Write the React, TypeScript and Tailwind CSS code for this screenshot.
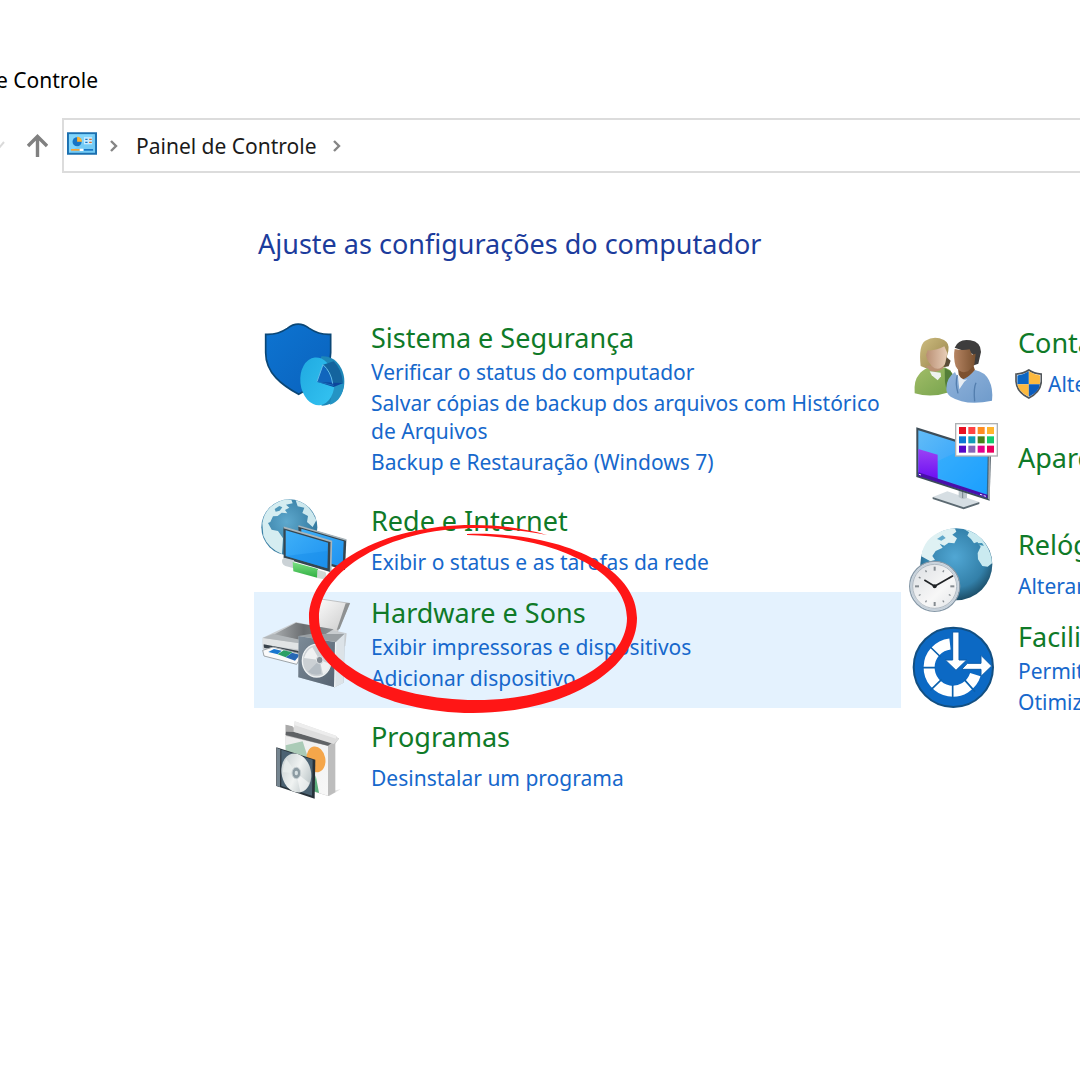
import type { ReactNode } from "react";

function Icon({ box, children }: { box: string; children: ReactNode }) {
  return (
    <svg viewBox={box} className="h-[72px] w-[88px] shrink-0 overflow-visible" aria-hidden="true">
      {children}
    </svg>
  );
}

function SecurityIcon() {
  return (
    <Icon box="30 30 264 216">
      <defs>
        <linearGradient id="sec" x1="0" y1="0" x2="1" y2="1">
          <stop offset="0" stopColor="#0d74d1" />
          <stop offset="1" stopColor="#0a62bd" />
        </linearGradient>
        <linearGradient id="disc" x1="0" y1="0" x2="1" y2="1">
          <stop offset="0" stopColor="#1fa9e0" />
          <stop offset="1" stopColor="#35c4f2" />
        </linearGradient>
      </defs>
      <path d="M47 73Q82 75 112 55Q144 30 178 55Q208 75 242 73V128C242 190 195 226 146 253C97 226 47 190 47 128Z" fill="url(#sec)" stroke="#0b4776" strokeWidth="5" />
      <path d="M214 139C252 135 283 170 283 215C283 253 258 285 215 287L200 210Z" fill="#1e87b8" />
      <path d="M250 221L282 221C281 250 265 277 240 284Z" fill="#2494c4" />
      <ellipse cx="202" cy="214" rx="51" ry="72" fill="url(#disc)" transform="rotate(-6 202 214)" />
      <path d="M201 215L219 164Q240 184 252 221Z" fill="#1166bd" />
      <path d="M219 164L251 154Q274 176 279 218L249 220Q240 184 219 164Z" fill="#14649e" />
      <path d="M201 215L248 218L280 219L251 231Z" fill="#0d459b" />
      <path d="M201 215L219 164Q243 185 248 221" fill="none" stroke="#63bce9" strokeWidth="3" />
      <path d="M201 215L251 226" stroke="#1e8ad0" strokeWidth="2" />
    </Icon>
  );
}

function NetworkIcon() {
  return (
    <Icon box="30 39 264 216">
      <defs>
        <radialGradient id="netGlobe" cx=".45" cy=".4" r=".65">
          <stop offset="0" stopColor="#5ea9ce" />
          <stop offset="1" stopColor="#2d7298" />
        </radialGradient>
        <linearGradient id="screen" x1="0" y1="0" x2="1" y2="1">
          <stop offset="0" stopColor="#3fb0f8" />
          <stop offset="1" stopColor="#1e92f0" />
        </linearGradient>
        <linearGradient id="cable" x1="0" y1="0" x2="0" y2="1">
          <stop offset="0" stopColor="#7be083" />
          <stop offset="1" stopColor="#2fae41" />
        </linearGradient>
      </defs>
      <circle cx="118" cy="112" r="84" fill="url(#netGlobe)" />
      <path d="M37 100Q43 60 75 41Q100 25 124 29L128 40L108 44L118 53L105 60L112 70L95 68L83 78L69 79L61 96L54 99L65 119L84 123L99 145L96 192Q54 174 40 137Z" fill="#d5edf1" />
      <path d="M137 31Q181 42 199 91L188 111L171 96L174 78L157 69L163 53L143 49Z" fill="#cde8ee" />
      <path d="M74 57L88 48L97 52L89 62L77 65Z" fill="#4f97b9" />
      <path d="M145 107L289 149L285 240L245 229L148 198Z" fill="#364650" />
      <path d="M154 116L281 154L278 231L154 196Z" fill="url(#screen)" />
      <path d="M145 108L289 150" stroke="#a9b5bb" strokeWidth="4" />
      <path d="M100 112L244 155L241 246L101 205Z" fill="#364650" />
      <path d="M107 121L234 158L232 235L107 198Z" fill="url(#screen)" />
      <path d="M107 198L232 183V235Z" fill="#168be9" opacity=".45" />
      <path d="M101 112L244 154L242 243" fill="none" stroke="#a9b5bb" strokeWidth="5" />
      <path d="M103 203L132 211V235L106 228Q92 221 97 208Z" fill="#cbd2d6" />
      <path d="M128 216L204 237V264L130 244Z" fill="url(#cable)" />
      <path d="M202 239L226 246Q233 256 223 268L201 264Z" fill="#cfd8d4" />
    </Icon>
  );
}

function PrinterIcon() {
  return (
    <Icon box="30 15 264 216">
      <defs>
        <linearGradient id="prTop" x1="0" y1="0" x2="1" y2="0">
          <stop offset="0" stopColor="#a9adaf" />
          <stop offset=".5" stopColor="#6a6d70" />
          <stop offset="1" stopColor="#8b8f92" />
        </linearGradient>
        <linearGradient id="paper" x1="0" y1="0" x2="1" y2="1">
          <stop offset="0" stopColor="#ffffff" />
          <stop offset="1" stopColor="#c9c9c9" />
        </linearGradient>
        <linearGradient id="speaker" x1="0" y1="0" x2="1" y2="1">
          <stop offset="0" stopColor="#7c8b98" />
          <stop offset="1" stopColor="#566371" />
        </linearGradient>
      </defs>
      <path d="M205 26L299 40L262 126L190 112Z" fill="url(#paper)" stroke="#aaa" strokeWidth="2" />
      <path d="M287 40L300 39L269 116L260 121Z" fill="#8e9192" />
      <path d="M38 143L138 96L290 130L286 168L180 203L38 177Z" fill="#c8cccf" />
      <path d="M71 134L138 98L251 118L184 158Z" fill="url(#prTop)" />
      <path d="M38 143L180 164L181 183L38 164Z" fill="#e1e4e5" />
      <path d="M38 144L70 132L184 157L180 164Z" fill="#b2b7ba" />
      <path d="M41 163L157 185V195L42 173Z" fill="#39434b" />
      <path d="M38 181L69 171L157 193L140 223L42 198Z" fill="#fafafa" stroke="#9ea5a9" strokeWidth="3" />
      <path d="M55 186L72 177L95 182L83 193Z" fill="#1877cf" />
      <path d="M83 193L101 181L127 187L107 202Z" fill="#2a9f65" />
      <path d="M107 202L126 188L150 194L135 212Z" fill="#2768b5" />
      <path d="M146 138L250 134L285 129L281 278L254 292L145 262Z" fill="#bdc6cd" />
      <path d="M146 138L257 157L254 292L145 262Z" fill="url(#speaker)" />
      <path d="M257 157L284 130L280 279L255 291Z" fill="#dce3e8" />
      <path d="M146 138L180 132L283 132L257 156Z" fill="#999fa3" />
      <path d="M257 157L254 291" stroke="#eef2f4" strokeWidth="4" />
      <ellipse cx="200" cy="212" rx="43" ry="49" fill="#cbd0d4" stroke="#eef1f2" strokeWidth="4" />
      <path d="M209 210L187 172Q169 181 162 204Z" fill="#f0f2f3" />
      <path d="M209 210L219 253Q235 245 241 222Z" fill="#edf0f1" />
      <path d="M209 210L174 245Q193 260 214 251Z" fill="#b5bdc4" />
      <ellipse cx="209" cy="210" rx="10" ry="11" fill="#858d95" stroke="#e4e7e9" strokeWidth="3" />
    </Icon>
  );
}

function ProgramsIcon() {
  return (
    <Icon box="30 27 264 216">
      <defs>
        <linearGradient id="boxFront" x1="0" y1="0" x2="1" y2="1">
          <stop offset="0" stopColor="#ececec" />
          <stop offset="1" stopColor="#f8f8f8" />
        </linearGradient>
        <linearGradient id="cd" x1="0" y1="0" x2="1" y2="1">
          <stop offset="0" stopColor="#bec8ca" />
          <stop offset=".5" stopColor="#f0f3f2" />
          <stop offset="1" stopColor="#aab6ba" />
        </linearGradient>
      </defs>
      <path d="M232 245L272 238L237 259Z" fill="#e3e3e3" />
      <path d="M107 44L130 52L267 85L256 101V247L235 258L107 220Z" fill="#bdbdbd" />
      <path d="M108 78L234 108V257L107 220Z" fill="url(#boxFront)" />
      <path d="M107 44L128 49L131 65L251 87L234 107L107 75Z" fill="#aaaaaa" />
      <path d="M108 65L131 66L249 96L234 107L107 75Z" fill="#5f6265" />
      <path d="M134 34L258 77L267 88L251 102L131 65Z" fill="#dedede" />
      <path d="M134 34L258 77L258 86L135 46Z" fill="#ededed" />
      <path d="M107 106L158 94L174 143L162 182L108 166Z" fill="#abcbb7" />
      <ellipse cx="198" cy="148" rx="28" ry="39" fill="#f5a64a" transform="rotate(-10 198 148)" />
      <path d="M197 196L207 249L190 244Z" fill="#5cae7c" />
      <path d="M79 112L196 149L194 266L79 228Z" fill="#273139" />
      <path d="M94 119L188 149L186 257L94 228Z" fill="#4b6272" />
      <path d="M81 114L91 118L90 231L81 228Z" fill="#758590" />
      <ellipse cx="139" cy="189" rx="44" ry="59" fill="url(#cd)" transform="rotate(-13 139 189)" />
      <path d="M139 189L109 147Q98 165 99 187Z" fill="#e8eeec" opacity=".8" />
      <path d="M139 189L151 246Q172 242 178 219Z" fill="#fff" opacity=".55" />
      <ellipse cx="139" cy="189" rx="13" ry="17" fill="#8c9ba2" stroke="#c8d0d3" strokeWidth="3" />
      <ellipse cx="139" cy="189" rx="5" ry="7" fill="#d7e0e2" />
    </Icon>
  );
}

function UsersIcon() {
  return (
    <Icon box="27 15 264 216">
      <defs>
        <linearGradient id="hair" x1="0" y1="0" x2="1" y2="1">
          <stop offset="0" stopColor="#cebd80" />
          <stop offset="1" stopColor="#958149" />
        </linearGradient>
        <linearGradient id="faceA" x1="0" y1="0" x2="1" y2="0">
          <stop offset="0" stopColor="#b98f73" />
          <stop offset="1" stopColor="#e8ceb8" />
        </linearGradient>
        <linearGradient id="faceB" x1="0" y1="0" x2="1" y2="0">
          <stop offset="0" stopColor="#b68563" />
          <stop offset="1" stopColor="#79502f" />
        </linearGradient>
        <linearGradient id="green" x1="0" y1="0" x2="1" y2="1">
          <stop offset="0" stopColor="#a2bd68" />
          <stop offset="1" stopColor="#76a34d" />
        </linearGradient>
        <linearGradient id="blue" x1="0" y1="0" x2="1" y2="1">
          <stop offset="0" stopColor="#91b3db" />
          <stop offset="1" stopColor="#6f9bcb" />
        </linearGradient>
      </defs>
      <path d="M135 107L152 122L146 139L130 142Z" fill="#5b4c38" />
      <path d="M62 138Q55 75 76 62Q103 45 132 60Q150 70 145 93L132 142L85 148Z" fill="url(#hair)" />
      <path d="M79 137L126 134L137 154L112 181L84 162Z" fill="#ba9073" />
      <path d="M83 91Q108 93 133 79L142 99L135 132Q122 151 104 145Q82 130 78 105Z" fill="url(#faceA)" />
      <path d="M44 220Q41 181 56 165Q65 151 83 144Q100 168 134 142L151 151L158 166L147 217Q94 235 44 220Z" fill="url(#green)" />
      <path d="M89 154L122 158L123 169L113 181L95 166Z" fill="#eef3ef" />
      <path d="M134 145L151 153L158 162L145 184L139 208L135 186Z" fill="#547f39" />
      <path d="M164 83Q176 55 211 61Q243 66 243 96L235 131L222 136L218 102Z" fill="#3e3d3d" />
      <path d="M173 139L217 126L225 151Q209 169 202 175Q184 184 176 163Z" fill="#7d512f" />
      <path d="M164 87Q187 93 209 88L216 104L227 101L223 135L204 154Q180 163 167 139Q159 112 164 87Z" fill="url(#faceB)" />
      <path d="M139 204Q140 173 165 156Q173 176 185 180Q207 172 225 150Q255 156 267 181Q280 206 276 242Q199 259 152 230Q138 220 139 204Z" fill="url(#blue)" />
      <path d="M173 164L178 208L193 185L202 178Q185 183 173 164Z" fill="#e7edf3" />
      <path d="M172 165Q165 190 174 220M224 244Q220 205 228 188" fill="none" stroke="#537eae" strokeWidth="4" />
    </Icon>
  );
}

const swatches = [
  ["#e81123", "#ff4343", "#ff8c21", "#ffb52e"],
  ["#0c78d4", "#109cb8", "#47821b", "#14cb6c"],
  ["#5608c8", "#8765b8", "#e3008c", "#ea005e"],
];

function AppearanceIcon() {
  return (
    <Icon box="27 6 264 216">
      <defs>
        <linearGradient id="desk" x1="0" y1="0" x2="1" y2="1">
          <stop offset="0" stopColor="#62bcf7" />
          <stop offset="1" stopColor="#1695ff" />
        </linearGradient>
        <linearGradient id="purple" x1="0" y1="0" x2="0" y2="1">
          <stop offset="0" stopColor="#9b42f4" />
          <stop offset="1" stopColor="#6c0ff2" />
        </linearGradient>
      </defs>
      <path d="M98 246L142 229L238 261L191 280Z" fill="#d6dee3" />
      <path d="M98 246L191 277L238 261V267L191 283L98 252Z" fill="#5c6a72" />
      <path d="M176 221L201 228V249L188 253L176 246Z" fill="#bbc5ca" />
      <path d="M188 228V249" stroke="#77848b" strokeWidth="3" />
      <path d="M49 37L273 107L269 257L49 186Z" fill="#3d4d58" />
      <path d="M55 46L263 111L260 248L55 181Z" fill="url(#desk)" />
      <path d="M55 165L263 69V240Z" fill="#1eabff" opacity=".45" />
      <path d="M55 102L113 119V193L55 174Z" fill="url(#purple)" />
      <path d="M55 172L262 239V249L55 183Z" fill="#4a0eab" />
      <path d="M266 112L270 108V256L264 251Z" fill="#9ea8ae" />
      <path d="M240 238L247 240M251 242L258 244M57 178L63 180" stroke="#ede9fd" strokeWidth="3" />
      <rect x="167" y="26" width="125" height="97" fill="#fff" stroke="#adb1b4" strokeWidth="4" />
      {swatches.map((row, r) =>
        row.map((color, c) => (
          <rect key={color} x={177 + c * 28} y={36 + r * 28} width="21" height="21" fill={color} />
        )),
      )}
    </Icon>
  );
}

function ClockIcon() {
  return (
    <Icon box="27 21 264 216">
      <defs>
        <radialGradient id="globe" cx=".48" cy=".4" r=".65">
          <stop offset="0" stopColor="#51a7d4" />
          <stop offset=".65" stopColor="#3380a9" />
          <stop offset="1" stopColor="#153f55" />
        </radialGradient>
        <linearGradient id="face" x1="0" y1="0" x2="1" y2="1">
          <stop offset="0" stopColor="#d9dde1" />
          <stop offset=".6" stopColor="#f7f7f7" />
          <stop offset="1" stopColor="#dfe2e5" />
        </linearGradient>
      </defs>
      <circle cx="169" cy="133" r="108" fill="url(#globe)" />
      <path d="M64 109Q71 55 124 34Q145 24 165 26L169 35L157 44L171 55L163 70L146 68L133 77L119 71L128 83L107 93L97 108L105 120L91 124Z" fill="#dff1f3" />
      <path d="M111 57L128 46L137 54L124 62Z" fill="#61a9ca" />
      <path d="M192 27Q237 38 258 74Q275 100 276 130L263 140L247 138L234 118L233 99L242 80L232 66L222 70L213 57L202 47L207 37Z" fill="#caeaf0" />
      <path d="M229 70L246 69L252 77L241 76Z" fill="#3f90b5" />
      <circle cx="104" cy="199" r="75" fill="url(#face)" stroke="#8799a8" strokeWidth="4" />
      <circle cx="104" cy="199" r="70" fill="none" stroke="#c6d1db" strokeWidth="5" />
      <circle cx="104" cy="199" r="66" fill="none" stroke="#92a0ac" strokeWidth="2" />
      <g stroke="#858b90" strokeWidth="4">
        {[0, 30, 60, 90, 120, 150, 180, 210, 240, 270, 300, 330].map((a) => (
          <path key={a} d={a % 90 === 0 ? "M104 140V152" : "M104 144V150"} strokeWidth={a % 90 === 0 ? 6 : 4} transform={`rotate(${a} 104 199)`} />
        ))}
      </g>
      <path d="M73 180L104 199L159 167" fill="none" stroke="#202326" strokeWidth="5" />
      <circle cx="104" cy="199" r="6" fill="#202326" />
    </Icon>
  );
}

function AccessIcon() {
  return (
    <Icon box="27 12 264 216">
      <circle cx="160" cy="157" r="119" fill="#0c69c4" stroke="#124f82" strokeWidth="6" />
      <path d="M150 87A71 71 0 1 0 226 179" fill="none" stroke="#fff" strokeWidth="33" />
      <path d="M91 96L122 126M68 158H106M91 226L125 193M158 210V250M193 194L225 230" stroke="#0b61ae" strokeWidth="5" />
      <path d="M158 51H177V135H200L168 166L136 135H158Z" fill="#fff" stroke="#0b5dab" strokeWidth="3" />
      <path d="M185 163L202 145H243V121L275 153L243 184V163Z" fill="#fff" stroke="#0b5dab" strokeWidth="3" />
    </Icon>
  );
}

function ShieldBadge() {
  return (
    <svg viewBox="347 147 80 89" className="h-[30px] w-[27px] shrink-0" aria-hidden="true">
      <path d="M388 150Q403 161 425 162V184Q423 215 388 233Q352 215 350 184V162Q372 161 388 150Z" fill="#fff" stroke="#505559" strokeWidth="5" />
      <path d="M388 154V192H354V166Q374 164 388 154Z" fill="#0b66c4" />
      <path d="M388 154V192H421V166Q403 164 388 154Z" fill="#fcb93f" />
      <path d="M354 192H388V229Q358 215 354 192Z" fill="#fcb93f" />
      <path d="M388 192H421Q418 215 388 229Z" fill="#0b5dbd" />
    </svg>
  );
}

function MarkerCircle() {
  return (
    <svg
      viewBox="300 515 345 205"
      className="pointer-events-none absolute -top-[77px] left-[46px] h-[205px] w-[345px]"
      aria-hidden="true"
    >
      <path
        d="M547 535C523 528 499 525 473 525C382 525 309 566 309 618C309 671 383 713 473 713C563 713 637 671 637 618C637 566 560 531 467 534V535C559 537 627 573 627 618C627 664 560 700 476 700C391 700 319 664 319 618C319 570 389 529 473 528C502 528 524 531 547 535Z"
        fill="#ff1616"
      />
    </svg>
  );
}

type Category = {
  title: string;
  links: string[];
  icon: ReactNode;
  highlighted?: boolean;
  shielded?: boolean;
};

const leftColumn: Category[] = [
  {
    title: "Sistema e Segurança",
    links: [
      "Verificar o status do computador",
      "Salvar cópias de backup dos arquivos com Histórico de Arquivos",
      "Backup e Restauração (Windows 7)",
    ],
    icon: <SecurityIcon />,
  },
  { title: "Rede e Internet", links: ["Exibir o status e as tarefas da rede"], icon: <NetworkIcon /> },
  {
    title: "Hardware e Sons",
    links: ["Exibir impressoras e dispositivos", "Adicionar dispositivo"],
    icon: <PrinterIcon />,
    highlighted: true,
  },
  { title: "Programas", links: ["Desinstalar um programa"], icon: <ProgramsIcon /> },
];

const rightColumn: Category[] = [
  { title: "Contas", links: ["Alterar"], icon: <UsersIcon />, shielded: true },
  { title: "Aparência", links: [], icon: <AppearanceIcon /> },
  { title: "Relógio", links: ["Alterar"], icon: <ClockIcon /> },
  { title: "Facilidade", links: ["Permitir", "Otimizar"], icon: <AccessIcon /> },
];

function spacing(count: number) {
  if (count === 0) return "min-h-[102px]";
  return count === 1 ? "pb-2" : "pb-4";
}

function CategoryRow({ category, side }: { category: Category; side: "left" | "right" }) {
  const { title, links, icon, highlighted, shielded } = category;
  return (
    <section
      className={`relative flex items-start pt-[3px] ${spacing(links.length)} ${
        side === "left" ? "gap-[23px] pr-5 pl-[6px]" : "gap-[21px] pl-2 whitespace-nowrap"
      } ${highlighted ? "z-10 bg-[#e4f2fe]" : ""}`}
    >
      {icon}
      <div className="min-w-0">
        <h2 className={`text-[27px] leading-9 text-[#0f7a28] ${links.length === 0 ? "mt-[23px]" : ""}`}>
          <a href="#">{title}</a>
        </h2>
        <ul className={`flex flex-col gap-[3px] text-[21px] leading-7 text-[#1668cc] ${links.length === 1 ? "mt-[9px]" : "mt-[2px]"}`}>
          {links.map((link) => (
            <li key={link} className={shielded ? "-ml-[3px] flex h-7 items-center gap-[6px]" : ""}>
              {shielded && <ShieldBadge />}
              <a href="#">{link}</a>
            </li>
          ))}
        </ul>
      </div>
      {highlighted && <MarkerCircle />}
    </section>
  );
}

function Chevron() {
  return (
    <svg viewBox="0 0 8 12" className="h-3 w-2 shrink-0" aria-hidden="true">
      <path d="M1 1L6 6L1 11" fill="none" stroke="#858585" strokeWidth="2.4" />
    </svg>
  );
}

export default function App() {
  return (
    <div className="min-h-screen overflow-hidden bg-white pt-[66px] font-['Noto_Sans','Open_Sans',sans-serif]">
      <header>
        <p className="-ml-1 text-[21px] leading-7 text-black">e Controle</p>
        <nav className="mt-6 flex items-center" aria-label="Endereço">
          <button className="w-[27px] shrink-0" aria-label="Locais recentes">
            <svg viewBox="0 0 27 12" className="h-3 w-[27px]" aria-hidden="true">
              <path d="M-4 3L-1 8L4 2" fill="none" stroke="#dadada" strokeWidth="2" />
            </svg>
          </button>
          <button className="w-[35px] shrink-0" aria-label="Acima">
            <svg viewBox="0 0 21 24" className="h-6 w-[21px]" aria-hidden="true">
              <path d="M10.500 23V3M1 12L10.500 2.500L20 12" fill="none" stroke="#808080" strokeWidth="3.400" />
            </svg>
          </button>
          <div className="flex h-[55px] flex-1 items-center border-2 border-r-0 border-[#dcdcdc] pl-[3px]">
            <svg viewBox="200 217 92 69" className="mb-1 h-[23px] w-[30px] shrink-0" aria-hidden="true">
              <rect x="203" y="220" width="86" height="63" fill="#74cbf5" stroke="#1c70b0" strokeWidth="6" />
              <path d="M206 223H286L206 280Z" fill="#8bdcff" opacity=".6" />
              <circle cx="231" cy="246" r="14" fill="#1674c4" />
              <path d="M231 246V231A15 15 0 0 1 246 246Z" fill="#ffb02e" />
              <rect x="252" y="232" width="25" height="22" fill="#c6ebff" />
              <path d="M256 239H263M256 248H263" stroke="#1674c4" strokeWidth="4" />
              <path d="M268 239H276M268 248H276" stroke="#d96f34" strokeWidth="4" />
              <path d="M212 271H239" stroke="#ffa22b" strokeWidth="5" />
              <path d="M239 271H250" stroke="#fff" strokeWidth="7" />
              <path d="M252 271H280" stroke="#1674c4" strokeWidth="5" />
            </svg>
            <div className="ml-[13px] flex items-center">
              <Chevron />
              <a href="#" className="mr-4 ml-[18px] text-[21px] leading-7 text-[#1b1b1b]">
                Painel de Controle
              </a>
              <Chevron />
            </div>
          </div>
        </nav>
      </header>
      <main className="mt-[51px] pl-[254px]">
        <h1 className="pl-1 text-[27px] leading-10 text-[#1c3c9c]">Ajuste as configurações do computador</h1>
        <div className="mt-[53px] grid grid-cols-[647px_1fr]">
          <div className="flex flex-col gap-2">
            {leftColumn.map((c) => (
              <CategoryRow key={c.title} category={c} side="left" />
            ))}
          </div>
          <div className="flex min-w-0 flex-col gap-2 pt-[5px]">
            {rightColumn.map((c) => (
              <CategoryRow key={c.title} category={c} side="right" />
            ))}
          </div>
        </div>
      </main>
    </div>
  );
}
